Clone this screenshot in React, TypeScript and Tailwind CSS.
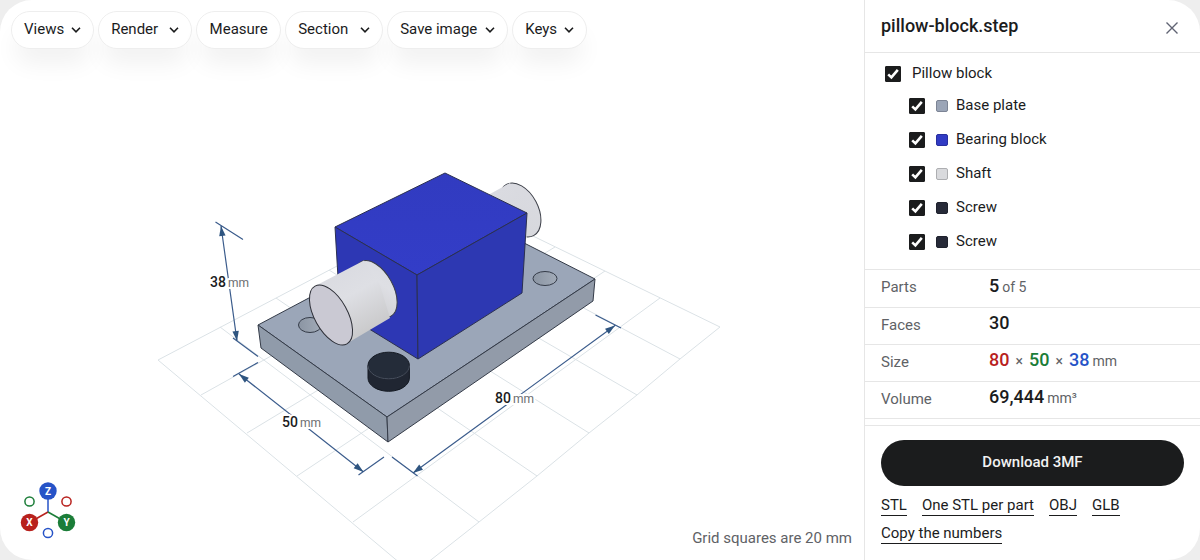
import { useState } from "react";

const MENUS = [
  { label: "Views", menu: true, width: "min-w-[83px]" },
  { label: "Render", menu: true, width: "min-w-[94px]" },
  { label: "Measure", menu: false, width: "min-w-[85px]" },
  { label: "Section", menu: true, width: "min-w-[98px]" },
  { label: "Save image", menu: true, width: "min-w-[121px]" },
  { label: "Keys", menu: true, width: "min-w-[75px]" },
];

const PARTS = [
  { id: "base", name: "Base plate", swatch: "bg-[#9ba5b7] border-[#7c8495]" },
  { id: "block", name: "Bearing block", swatch: "bg-[#313bc4] border-[#282f9e]" },
  { id: "shaft", name: "Shaft", swatch: "bg-[#d9dadd] border-[#adaeb1]" },
  { id: "screw-1", name: "Screw", swatch: "bg-[#272a38] border-[#1f222d]" },
  { id: "screw-2", name: "Screw", swatch: "bg-[#272a38] border-[#1f222d]" },
];

const EXPORTS = ["STL", "One STL per part", "OBJ", "GLB", "Copy the numbers"];

// x1, y1, x2, y2
const GRID = [
  [158, 360, 413, 574],
  [220, 327, 479, 522],
  [276, 298, 537, 476],
  [329, 270, 589, 433],
  [378, 245, 637, 395],
  [421, 222, 680, 359],
  [461, 201, 720, 327],
  [158, 360, 461, 201],
  [201, 395, 508, 224],
  [247, 433, 555, 247],
  [297, 476, 605, 271],
  [353, 522, 660, 298],
];

type ToolButtonProps = { label: string; menu: boolean; width: string };

function ToolButton({ label, menu, width }: ToolButtonProps) {
  return (
    <button
      type="button"
      className={`flex h-[38px] items-center rounded-full border border-[#eeeeee] bg-white px-3 text-[15px] leading-5 shadow-[0_18px_24px_-4px_rgba(0,0,0,0.06)] ${menu ? "justify-between gap-[7px]" : "justify-center"} ${width}`}
    >
      <span className="pb-0.5">{label}</span>
      {menu ? (
        <svg width="10" height="6" viewBox="0 0 10 6" fill="none" stroke="#1b1c1d" strokeWidth="1.6" aria-hidden="true">
          <path d="M1 0.8 5 4.8 9 0.8" />
        </svg>
      ) : null}
    </button>
  );
}

function Arrow({ x, y, angle }: { x: number; y: number; angle: number }) {
  return (
    <path d="M0 0 -10 -3.2 -10 3.2Z" fill="#2f5580" transform={`translate(${x} ${y}) rotate(${angle})`} />
  );
}

type DimensionProps = {
  from: [number, number];
  to: [number, number];
  label: [number, number];
  value: number;
  ticks: string;
};

function Dimension({ from, to, label, value, ticks }: DimensionProps) {
  const angle = (Math.atan2(to[1] - from[1], to[0] - from[0]) * 180) / Math.PI;
  return (
    <g>
      <path
        d={`M${from[0]} ${from[1]}L${to[0]} ${to[1]}${ticks}`}
        fill="none"
        stroke="#3b5c8c"
        strokeWidth="1.2"
      />
      <Arrow x={to[0]} y={to[1]} angle={angle} />
      <Arrow x={from[0]} y={from[1]} angle={angle + 180} />
      <text
        x={label[0]}
        y={label[1]}
        fill="#1b1c1d"
        stroke="#fff"
        strokeWidth="4"
        strokeLinejoin="round"
        paintOrder="stroke"
        className="text-[14px] font-medium"
      >
        {value}
        <tspan dx="2" fill="#6b6d70" className="text-[12px] font-normal">
          mm
        </tspan>
      </text>
    </g>
  );
}

function Model() {
  return (
    <svg
      viewBox="0 0 864 560"
      className="absolute inset-0 h-full w-full"
      role="img"
      aria-label="Pillow block, 80 by 50 by 38 mm"
    >
      <defs>
        <linearGradient id="shaft" gradientUnits="userSpaceOnUse" x1="337" y1="270" x2="371" y2="332">
          <stop offset="0" stopColor="#dadbe1" />
          <stop offset="0.4" stopColor="#dedfe4" />
          <stop offset="1" stopColor="#c9c9ca" />
        </linearGradient>
        <linearGradient id="shaftBack" gradientUnits="userSpaceOnUse" x1="505" y1="185" x2="535" y2="235">
          <stop offset="0" stopColor="#dadbe1" />
          <stop offset="1" stopColor="#d6d7dc" />
        </linearGradient>
        <linearGradient id="hole" x1="0" y1="0" x2="1" y2="0">
          <stop offset="0" stopColor="#8b95a3" />
          <stop offset="1" stopColor="#a2abb8" />
        </linearGradient>
        <linearGradient id="blockTop" x1="0" y1="0" x2="0" y2="1">
          <stop offset="0" stopColor="#313bc0" />
          <stop offset="1" stopColor="#333dc8" />
        </linearGradient>
      </defs>

      <g stroke="#dbe2e6" strokeWidth="1">
        {GRID.map(([x1, y1, x2, y2]) => (
          <line key={`${x1}-${y1}-${x2}`} x1={x1} y1={y1} x2={x2} y2={y2} />
        ))}
        <path d="M413 574 479 522 537 476 589 433 637 395 680 359 720 327" fill="none" />
      </g>

      <g stroke="#343b48" strokeWidth="1" strokeLinejoin="round">
        <path d="M258 325 467 214 595 279 387 417Z" fill="#9ba6b8" />
        <path d="M258 325 387 417 388 442 261 348Z" fill="#909baa" />
        <path d="M387 417 595 279 593 301 388 442Z" fill="#929ba9" />
        <ellipse cx="545" cy="278.5" rx="12" ry="7" fill="url(#hole)" />
        <ellipse cx="310" cy="325" rx="11.5" ry="7.5" fill="url(#hole)" />
      </g>

      <ellipse cx="520" cy="210" rx="29" ry="18" transform="rotate(62 520 210)" fill="url(#shaftBack)" stroke="#3c3f48" />
      <path d="M480 199.5 510 183 520 200 527 238 500 253Z" fill="url(#shaftBack)" />

      <g stroke="#2b3050" strokeWidth="1" strokeLinejoin="round">
        <path d="M445 173 527 213 417 275 335 227Z" fill="url(#blockTop)" />
        <path d="M335 227 417 275 418 359 340 311Z" fill="#2d37b4" />
        <path d="M417 275 527 213 522 293 418 359Z" fill="#2d38b2" />
      </g>

      <ellipse cx="376" cy="289" rx="31" ry="17" transform="rotate(61 376 289)" fill="url(#shaft)" stroke="#3c3f48" />
      <path d="M317 285 364 260.5 380 285 390 318 346 344Z" fill="url(#shaft)" />
      <ellipse cx="331" cy="315" rx="33" ry="16.5" transform="rotate(61 331 315)" fill="#cac9d3" stroke="#2c2e36" />

      <g stroke="#141922" strokeWidth="1">
        <path d="M368 365.5V378A20.7 13.3 0 0 0 409.4 378V365.5Z" fill="#202632" />
        <ellipse cx="388.7" cy="365.5" rx="20.7" ry="13.3" fill="#242c39" />
        <path d="M368 365.5A20.7 13.3 0 0 0 409.4 365.5" fill="none" stroke="#4a5261" />
      </g>

      <Dimension from={[221, 226]} to={[237, 341]} label={[210, 287]} value={38} ticks="M215.5 222 243 239.5M233 338 258 356.5" />
      <Dimension from={[239, 374]} to={[363.5, 472]} label={[282, 427]} value={50} ticks="M233 376.5 258 362.5M358.5 475 384 457" />
      <Dimension from={[413, 473]} to={[615, 325.5]} label={[495, 403]} value={80} ticks="M392 457 417.5 476M595.5 315 621 328" />
    </svg>
  );
}

function AxisGizmo() {
  return (
    <svg width="56" height="58" viewBox="20 481 56 58" className="absolute bottom-[21px] left-5" role="img" aria-label="Axes">
      <g strokeWidth="1.5" fill="none">
        <path d="M48 512V491" stroke="#2653c7" />
        <path d="M48 512 29.5 522.5" stroke="#b8211d" />
        <path d="M48 512 66.5 522.5" stroke="#1b7d38" />
        <circle cx="29.5" cy="501.5" r="4.6" stroke="#1b7d38" />
        <circle cx="66.5" cy="501.5" r="4.6" stroke="#b8211d" />
        <circle cx="48" cy="533" r="4.6" stroke="#2653c7" />
      </g>
      <circle cx="48" cy="491" r="8.7" fill="#2653c7" />
      <circle cx="29.5" cy="522.5" r="8.7" fill="#b8211d" />
      <circle cx="66.5" cy="522.5" r="8.7" fill="#1b7d38" />
      <g fill="#fff" textAnchor="middle" className="text-[10px] font-bold">
        <text x="48" y="494.5">Z</text>
        <text x="29.5" y="526">X</text>
        <text x="66.5" y="526">Y</text>
      </g>
    </svg>
  );
}

type CheckProps = { id: string; checked: boolean; onChange: (v: boolean) => void };

function Check({ id, checked, onChange }: CheckProps) {
  return (
    <span className="relative size-4 shrink-0">
      <input
        id={id}
        type="checkbox"
        checked={checked}
        onChange={(e) => onChange(e.target.checked)}
        className="block size-4 appearance-none rounded-[1px] border border-[#1b1c1d] checked:bg-[#1b1c1d]"
      />
      {checked ? (
        <svg viewBox="0 0 16 16" fill="none" stroke="#fff" strokeWidth="2.6" className="pointer-events-none absolute inset-0" aria-hidden="true">
          <path d="M3.2 8.4 6.4 11.4 12.8 3.8" />
        </svg>
      ) : null}
    </span>
  );
}

function PartTree() {
  const [visible, setVisible] = useState<Record<string, boolean>>(
    Object.fromEntries(PARTS.map((p) => [p.id, true])),
  );
  const all = PARTS.every((p) => visible[p.id]);

  return (
    <div className="border-b border-[#e6e6e6] pt-1.5 pb-[10px] pl-5 text-[15px] leading-5">
      <div className="flex h-[30px] items-center gap-[11px]">
        <Check
          id="all"
          checked={all}
          onChange={(v) => setVisible(Object.fromEntries(PARTS.map((p) => [p.id, v])))}
        />
        <label htmlFor="all" className="pb-0.5">
          Pillow block
        </label>
      </div>
      <ul className="pl-6">
        {PARTS.map((part) => (
          <li key={part.id} className="flex h-[34px] items-center">
            <Check
              id={part.id}
              checked={visible[part.id]}
              onChange={(v) => setVisible({ ...visible, [part.id]: v })}
            />
            <span className={`ml-[11px] size-3 rounded-[2px] border ${part.swatch}`} />
            <label htmlFor={part.id} className="ml-2 pb-0.5">
              {part.name}
            </label>
          </li>
        ))}
      </ul>
    </div>
  );
}

function Facts() {
  const th = "w-[124px] pb-0.5 pl-4 text-left text-[15px] font-normal text-[#606266]";
  const td = "pb-1";
  const num = "text-[18px] font-medium";
  const unit = "text-[14px] text-[#606266]";
  const row = "h-[37px] border-b border-[#e6e6e6]";
  return (
    <table className="w-full border-collapse leading-6">
      <tbody>
        <tr className={row}>
          <th scope="row" className={th}>Parts</th>
          <td className={td}>
            <span className={num}>5</span>
            <span className={`${unit} ml-[3px]`}>of 5</span>
          </td>
        </tr>
        <tr className={row}>
          <th scope="row" className={th}>Faces</th>
          <td className={td}>
            <span className={num}>30</span>
          </td>
        </tr>
        <tr className={row}>
          <th scope="row" className={th}>Size</th>
          <td className={td}>
            <span className={`${num} text-[#b8211d]`}>80</span>
            <span className={`${unit} mx-[6px]`}>×</span>
            <span className={`${num} text-[#1b7d38]`}>50</span>
            <span className={`${unit} mx-[6px]`}>×</span>
            <span className={`${num} text-[#2653c7]`}>38</span>
            <span className={`${unit} ml-[3px]`}>mm</span>
          </td>
        </tr>
        <tr className={row}>
          <th scope="row" className={th}>Volume</th>
          <td className={td}>
            <span className={num}>69,444</span>
            <span className={`${unit} ml-[3px]`}>mm³</span>
          </td>
        </tr>
      </tbody>
    </table>
  );
}

export default function App() {
  return (
    <div className="h-screen bg-[#eeeeee] font-[Roboto,sans-serif] text-[#1b1c1d]">
      <div className="flex h-full overflow-hidden rounded-[32px] bg-white">
        <main className="relative min-w-0 flex-1">
          <Model />
          <div className="relative flex flex-wrap gap-1 p-[11px]">
            {MENUS.map((m) => (
              <ToolButton key={m.label} {...m} />
            ))}
          </div>
          <AxisGizmo />
          <p className="absolute right-3 bottom-3 text-[15px] leading-5 text-[#606266]">
            Grid squares are 20 mm
          </p>
        </main>

        <aside className="flex w-[336px] shrink-0 flex-col border-l border-[#e6e6e6]">
          <header className="flex h-[53px] items-center justify-between border-b border-[#e6e6e6] pr-[22px] pl-4">
            <h1 className="text-[18px] leading-6 font-medium">pillow-block.step</h1>
            <button type="button" aria-label="Close" className="pt-1">
              <svg width="12" height="12" viewBox="0 0 12 12" stroke="#606373" strokeWidth="1.4" aria-hidden="true">
                <path d="M0.5 0.5 11.5 11.5M11.5 0.5 0.5 11.5" />
              </svg>
            </button>
          </header>
          <div className="min-h-0 flex-1 overflow-hidden">
            <PartTree />
            <Facts />
          </div>
          <footer className="border-t border-[#e6e6e6] px-4 pt-[14px] pb-4">
            <button
              type="button"
              className="h-[46px] w-full rounded-full bg-[#1b1c1d] pb-0.5 text-[15px] font-medium text-[#f2f2f2]"
            >
              Download 3MF
            </button>
            <div className="mt-[10px] flex flex-wrap gap-x-[15px] gap-y-2 text-[15px]">
              {EXPORTS.map((label) => (
                <a key={label} href="#" className="border-b border-[#1b1c1d] leading-[19px]">
                  {label}
                </a>
              ))}
            </div>
          </footer>
        </aside>
      </div>
    </div>
  );
}
